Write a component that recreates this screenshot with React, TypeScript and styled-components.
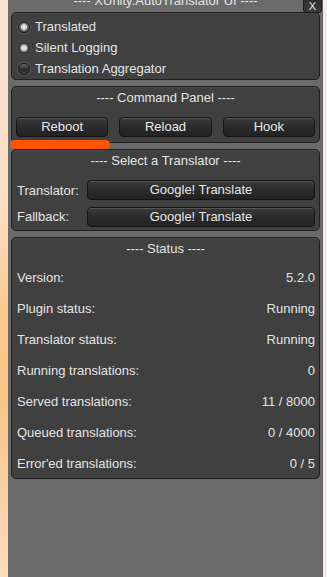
import React from "react";
import styled, { createGlobalStyle } from "styled-components";

const Global = createGlobalStyle`
  html, body {
    margin: 0;
    padding: 0;
    height: 100%;
    overflow: hidden;
  }
  body {
    background: #fbe7da;
    font-family: "Liberation Sans", Arial, sans-serif;
  }
`;

const Screen = styled.div`
  position: relative;
  display: flex;
  height: 577px;
  width: 327px;
  overflow: hidden;
`;

const LeftEdge = styled.div`
  width: 8px;
  background: linear-gradient(180deg, #fbe3d2 0%, #fce0c8 35%, #f9c78f 55%, #f7c48c 70%, #fbdcc0 100%);
`;

const RightEdge = styled.div`
  width: 4px;
  background: #f4ecec;
`;

const Window = styled.div`
  width: 315px;
  background: #6b6b6b;
  display: flex;
  flex-direction: column;
  gap: 6px;
  padding: 0 3px;
  box-sizing: border-box;
  color: #e4e4e4;
  font-size: 13px;
`;

const TitleBar = styled.div`
  position: relative;
  height: 7px;
  margin-bottom: -1px;
`;

const TitleText = styled.div`
  position: absolute;
  left: 0;
  right: 0;
  top: -6px;
  text-align: center;
  line-height: 14px;
`;

const CloseButton = styled.div`
  position: absolute;
  right: -2px;
  top: 0;
  width: 19px;
  height: 13px;
  border-radius: 0 0 4px 4px;
  background: linear-gradient(180deg, #2e2e2e, #3c3c3c);
  border: 1px solid #1a1a1a;
  border-top: none;
  box-sizing: border-box;
  text-align: center;
  line-height: 12px;
  font-size: 11px;
`;

const Box = styled.div<{ $height: number }>`
  height: ${(p) => p.$height}px;
  box-sizing: border-box;
  background: #404040;
  border: 1px solid #1f1f1f;
  border-radius: 5px;
  box-shadow: inset 0 1px 0 #4a4a4a;
  display: flex;
  flex-direction: column;
  padding: 0 4px;
`;

const BoxTitle = styled.div`
  text-align: center;
  height: 21px;
  line-height: 21px;
`;

const Toggles = styled.div`
  display: flex;
  flex-direction: column;
  padding-top: 3px;
`;

const ToggleRow = styled.div`
  display: flex;
  align-items: center;
  gap: 5px;
  height: 21px;
  padding-left: 2px;
`;

const Radio = styled.span<{ $on: boolean }>`
  width: 12px;
  height: 12px;
  border-radius: 50%;
  box-sizing: border-box;
  border: 1px solid #1a1a1a;
  background: ${(p) =>
    p.$on
      ? "radial-gradient(circle at 50% 50%, #efefef 0, #cfcfcf 2.5px, #6a6a6a 3.8px, #2e2e2e 100%)"
      : "linear-gradient(180deg, #6a6a6a, #2a2a2a 55%, #3e3e3e)"};
  box-shadow: 0 0 0 1px #555;
`;

const ButtonRow = styled.div`
  display: flex;
  gap: 11px;
  padding: 9px 0 0 0;
`;

const Button = styled.div`
  flex: 1;
  height: 20px;
  box-sizing: border-box;
  border: 1px solid #141414;
  border-radius: 4px;
  background: linear-gradient(180deg, #3a3a3a 0%, #2b2b2b 50%, #222 100%);
  box-shadow: inset 0 1px 0 #555;
  text-align: center;
  line-height: 18px;
  color: #e8e8e8;
`;

const Bar = styled.div`
  position: absolute;
  left: 10px;
  top: 140px;
  width: 100px;
  height: 9px;
  border-radius: 5px;
  background: #ff5500;
`;

const FieldRow = styled.div<{ $first?: boolean }>`
  display: flex;
  align-items: center;
  height: 27px;
  margin-top: ${(p) => (p.$first ? 6 : 0)}px;
`;

const FieldLabel = styled.div`
  width: 70px;
  padding-left: 1px;
`;

const StatusList = styled.div`
  display: flex;
  flex-direction: column;
  padding-top: 9px;
`;

const StatusRow = styled.div`
  display: flex;
  justify-content: space-between;
  height: 31px;
  line-height: 20px;
  padding: 0 0 0 1px;
`;

const toggles = [
  { label: "Translated", on: true },
  { label: "Silent Logging", on: true },
  { label: "Translation Aggregator", on: false },
];

const stats: [string, string][] = [
  ["Version:", "5.2.0"],
  ["Plugin status:", "Running"],
  ["Translator status:", "Running"],
  ["Running translations:", "0"],
  ["Served translations:", "11 / 8000"],
  ["Queued translations:", "0 / 4000"],
  ["Error'ed translations:", "0 / 5"],
];

export default function App() {
  return (
    <>
      <Global />
      <Screen>
        <LeftEdge />
        <Window>
          <TitleBar>
            <TitleText>---- XUnity.AutoTranslator UI ----</TitleText>
            <CloseButton>X</CloseButton>
          </TitleBar>
          <Box $height={68}>
            <Toggles>
              {toggles.map((t) => (
                <ToggleRow key={t.label}>
                  <Radio $on={t.on} />
                  {t.label}
                </ToggleRow>
              ))}
            </Toggles>
          </Box>
          <Box $height={57}>
            <BoxTitle>---- Command Panel ----</BoxTitle>
            <ButtonRow>
              <Button>Reboot</Button>
              <Button>Reload</Button>
              <Button>Hook</Button>
            </ButtonRow>
          </Box>
          <Box $height={82}>
            <BoxTitle>---- Select a Translator ----</BoxTitle>
            <FieldRow $first>
              <FieldLabel>Translator:</FieldLabel>
              <Button>Google! Translate</Button>
            </FieldRow>
            <FieldRow>
              <FieldLabel>Fallback:</FieldLabel>
              <Button>Google! Translate</Button>
            </FieldRow>
          </Box>
          <Box $height={242}>
            <BoxTitle>---- Status ----</BoxTitle>
            <StatusList>
              {stats.map(([k, v]) => (
                <StatusRow key={k}>
                  <span>{k}</span>
                  <span>{v}</span>
                </StatusRow>
              ))}
            </StatusList>
          </Box>
        </Window>
        <RightEdge />
        <Bar />
      </Screen>
    </>
  );
}
